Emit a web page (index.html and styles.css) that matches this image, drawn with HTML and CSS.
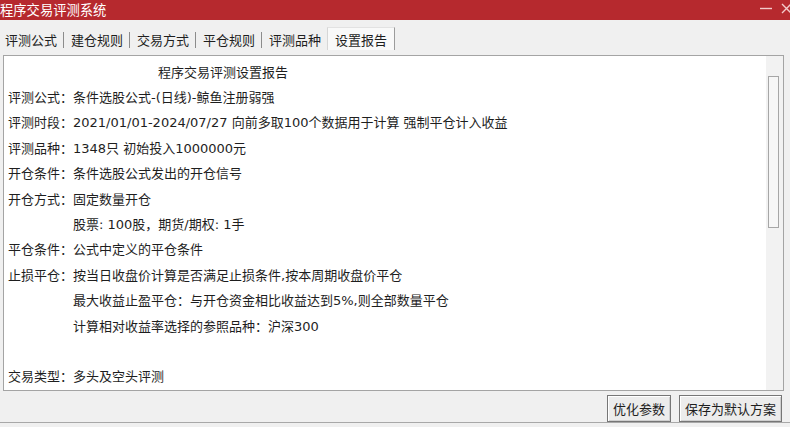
FILE: index.html
```html
<!DOCTYPE html>
<html lang="zh">
<head>
<meta charset="utf-8">
<title>程序交易评测系统</title>
<link rel="stylesheet" href="styles.css">
</head>
<body>
<div class="window">
  <div class="titlebar">
    <span class="title">程序交易评测系统</span>
    <div class="controls">
      <svg class="min" width="12" height="20" viewBox="0 0 12 20"><path d="M0 8.5H12" stroke="#f3caca" stroke-width="1.4"/></svg>
      <svg class="close" width="9" height="20" viewBox="0 0 9 20"><path d="M1 4L10 13M10 4L1 13" stroke="#f3caca" stroke-width="1.4"/></svg>
    </div>
  </div>
  <div class="tabs">
    <span class="tab">评测公式</span><span class="sep"></span>
    <span class="tab">建仓规则</span><span class="sep"></span>
    <span class="tab">交易方式</span><span class="sep"></span>
    <span class="tab">平仓规则</span><span class="sep"></span>
    <span class="tab">评测品种</span>
    <span class="tab active">设置报告</span>
  </div>
  <div class="panel">
    <div class="report">
      <div class="heading">程序交易评测设置报告</div>
      <div class="row"><span class="label">评测公式：</span><span class="value">条件选股公式-(日线)-鲸鱼注册弱强</span></div>
      <div class="row"><span class="label">评测时段：</span><span class="value">2021/01/01-2024/07/27 向前多取100个数据用于计算 强制平仓计入收益</span></div>
      <div class="row"><span class="label">评测品种：</span><span class="value">1348只 初始投入1000000元</span></div>
      <div class="row"><span class="label">开仓条件：</span><span class="value">条件选股公式发出的开仓信号</span></div>
      <div class="row"><span class="label">开仓方式：</span><span class="value">固定数量开仓</span></div>
      <div class="row"><span class="label"></span><span class="value">股票: 100股，期货/期权: 1手</span></div>
      <div class="row"><span class="label">平仓条件：</span><span class="value">公式中定义的平仓条件</span></div>
      <div class="row"><span class="label">止损平仓：</span><span class="value">按当日收盘价计算是否满足止损条件,按本周期收盘价平仓</span></div>
      <div class="row"><span class="label"></span><span class="value">最大收益止盈平仓：与开仓资金相比收益达到5%,则全部数量平仓</span></div>
      <div class="row"><span class="label"></span><span class="value">计算相对收益率选择的参照品种：沪深300</span></div>
      <div class="row"><span class="label"></span><span class="value"></span></div>
      <div class="row"><span class="label">交易类型：</span><span class="value">多头及空头评测</span></div>
    </div>
    <div class="scrollbar"><div class="thumb"></div></div>
  </div>
  <div class="footer">
    <button class="btn">优化参数</button>
    <button class="btn">保存为默认方案</button>
  </div>
</div>
</body>
</html>
```

FILE: styles.css
```css
* { box-sizing: border-box; }

html, body {
  margin: 0;
  padding: 0;
  background: #f0f0f0;
}

body {
  width: 790px;
  height: 427px;
  overflow: hidden;
  font-family: "DejaVu Sans", "Noto Sans CJK SC", sans-serif;
  font-size: 13px;
  color: #1e1e1e;
}

.window {
  display: flex;
  flex-direction: column;
  height: 427px;
}

.titlebar {
  height: 20px;
  background: #b6292e;
  display: flex;
  justify-content: space-between;
  align-items: center;
  overflow: hidden;
}

.title {
  color: #ffffff;
  font-family: "Noto Sans CJK SC", sans-serif;
  font-size: 13.3px;
  line-height: 20px;
}

.controls {
  display: flex;
  gap: 9px;
  align-items: center;
}

.controls svg { display: block; }

.tabs {
  height: 30px;
  display: flex;
  align-items: flex-end;
}

.tab {
  font-family: "Noto Sans CJK SC", sans-serif;
  padding: 3px 6px 0 7px;
  height: 23px;
  line-height: 20px;
  white-space: nowrap;
}

.tab:first-child { padding-left: 5px; }

.tab.active {
  background: #f9f9f9;
  border-left: 1px solid #d6d6d6;
  border-right: 1px solid #9c9c9c;
  border-top: 1px solid #e2e2e2;
  padding-top: 2px;
  padding-right: 7px;
}

.sep {
  width: 1px;
  height: 16px;
  background: #8c8c8c;
  margin-bottom: 2px;
}

.panel {
  margin: 5px 6px 0 3px;
  height: 336px;
  border: 1px solid #a4a4a4;
  background: #ffffff;
  display: flex;
}

.report {
  flex: 1;
  padding: 3px 0 0 4px;
}

.heading {
  padding-left: 150px;
  line-height: 26px;
  font-family: "Noto Sans CJK SC", sans-serif;
}

.row {
  display: flex;
  line-height: 25.4px;
  height: 25.4px;
  white-space: nowrap;
}

.label {
  width: 65px;
  flex: none;
}

.scrollbar {
  width: 17px;
  background: #f2f2f2;
  flex: none;
}

.thumb {
  margin: 20px 0 0 2px;
  width: 11px;
  height: 152px;
  border: 1px solid #a6a6a6;
  background: #f6f6f6;
}

.footer {
  height: 32px;
  display: flex;
  justify-content: flex-end;
  align-items: flex-start;
  gap: 8px;
  padding: 4px 8px 0 0;
  border-bottom: 1px solid #a8a8a8;
}

.btn {
  height: 27px;
  padding: 0 5px;
  font-family: "Noto Sans CJK SC", sans-serif;
  font-size: 13px;
  line-height: 25px;
  color: #1e1e1e;
  background: #ececec;
  border: 1px solid #767676;
  box-shadow: inset 1px 1px 0 #ffffff, inset -1px -1px 0 #cfcfcf;
  border-radius: 0;
}
```
